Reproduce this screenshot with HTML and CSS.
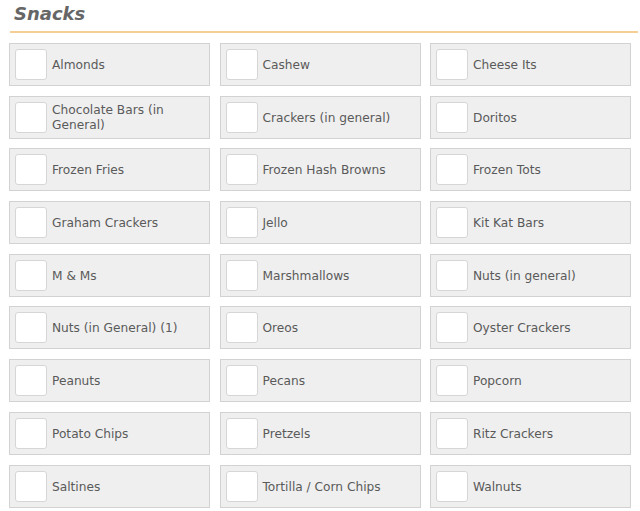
FILE: index.html
```html
<!DOCTYPE html>
<html>
<head>
<meta charset="utf-8">
<link rel="stylesheet" href="styles.css">
</head>
<body>
<div class="page">
  <h2 class="title">Snacks</h2>
  <div class="grid">
    <label class="item"><span class="box"></span><span class="text">Almonds</span></label>
    <label class="item"><span class="box"></span><span class="text">Cashew</span></label>
    <label class="item"><span class="box"></span><span class="text">Cheese Its</span></label>
    <label class="item"><span class="box"></span><span class="text">Chocolate Bars (in General)</span></label>
    <label class="item"><span class="box"></span><span class="text">Crackers (in general)</span></label>
    <label class="item"><span class="box"></span><span class="text">Doritos</span></label>
    <label class="item"><span class="box"></span><span class="text">Frozen Fries</span></label>
    <label class="item"><span class="box"></span><span class="text">Frozen Hash Browns</span></label>
    <label class="item"><span class="box"></span><span class="text">Frozen Tots</span></label>
    <label class="item"><span class="box"></span><span class="text">Graham Crackers</span></label>
    <label class="item"><span class="box"></span><span class="text">Jello</span></label>
    <label class="item"><span class="box"></span><span class="text">Kit Kat Bars</span></label>
    <label class="item"><span class="box"></span><span class="text">M &amp; Ms</span></label>
    <label class="item"><span class="box"></span><span class="text">Marshmallows</span></label>
    <label class="item"><span class="box"></span><span class="text">Nuts (in general)</span></label>
    <label class="item"><span class="box"></span><span class="text">Nuts (in General) (1)</span></label>
    <label class="item"><span class="box"></span><span class="text">Oreos</span></label>
    <label class="item"><span class="box"></span><span class="text">Oyster Crackers</span></label>
    <label class="item"><span class="box"></span><span class="text">Peanuts</span></label>
    <label class="item"><span class="box"></span><span class="text">Pecans</span></label>
    <label class="item"><span class="box"></span><span class="text">Popcorn</span></label>
    <label class="item"><span class="box"></span><span class="text">Potato Chips</span></label>
    <label class="item"><span class="box"></span><span class="text">Pretzels</span></label>
    <label class="item"><span class="box"></span><span class="text">Ritz Crackers</span></label>
    <label class="item"><span class="box"></span><span class="text">Saltines</span></label>
    <label class="item"><span class="box"></span><span class="text">Tortilla / Corn Chips</span></label>
    <label class="item"><span class="box"></span><span class="text">Walnuts</span></label>
  </div>
</div>
</body>
</html>
```

FILE: styles.css
```css
html, body {
  margin: 0;
  padding: 0;
  background: #ffffff;
}
.page {
  padding: 0 2px 0 9px;
  font-family: "DejaVu Sans", Verdana, sans-serif;
}
.title {
  margin: 0 0 10px 1px;
  padding: 2px 0 5px 4px;
  font-size: 18px;
  line-height: 24px;
  font-weight: bold;
  font-style: italic;
  color: #666666;
  border-bottom: 2px solid #f3cf96;
}
.grid {
  display: grid;
  grid-template-columns: 201px 201px 201px;
  column-gap: 9.5px;
  row-gap: 9.7px;
}
.item {
  display: flex;
  align-items: center;
  gap: 5px;
  height: 43px;
  box-sizing: border-box;
  padding: 0 6px 0 5px;
  background: #efefef;
  border: 1.5px solid #d2d2d2;
}
.box {
  flex: none;
  width: 32px;
  height: 31px;
  box-sizing: border-box;
  background: #ffffff;
  border: 1px solid #d6d6d6;
  border-radius: 3px;
}
.text {
  padding-top: 2px;
  font-size: 12.2px;
  line-height: 15px;
  color: #5a5a5a;
}
```
